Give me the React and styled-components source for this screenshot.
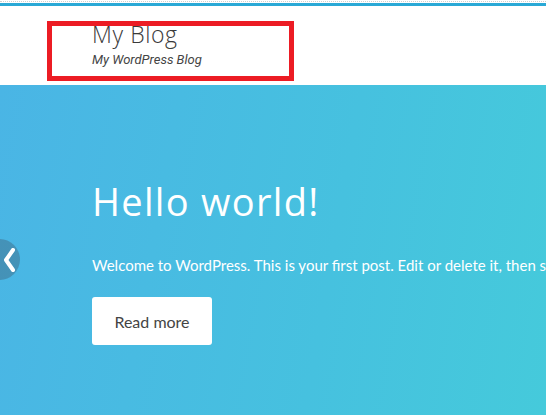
import React from 'react'
import styled, { createGlobalStyle } from 'styled-components'

const GlobalStyle = createGlobalStyle`
  html, body {
    margin: 0;
    padding: 0;
    background: #fff;
    overflow: hidden;
  }
`

const Page = styled.div`
  width: 546px;
  height: 415px;
  overflow: hidden;
  padding-top: 1px;
  box-sizing: border-box;
  display: flex;
  flex-direction: column;
`

const DottedRule = styled.div`
  border-top: 1px dotted #cfcfcf;
  margin-bottom: 1px;
`

const AccentBar = styled.div`
  height: 3px;
  background: #2aa9d6;
`

const Header = styled.header`
  position: relative;
  height: 79px;
  padding: 14px 0 0 92px;
  box-sizing: border-box;
  background: #fff;
`

const SiteTitle = styled.h1`
  margin: 0;
  font-family: 'Open Sans', 'Liberation Sans', sans-serif;
  font-weight: 300;
  font-size: 23px;
  letter-spacing: 0.6px;
  line-height: 28px;
  color: #3a3a3a;
`

const Tagline = styled.p`
  margin: 3px 0 0;
  font-family: 'Roboto', 'Liberation Sans', sans-serif;
  font-style: italic;
  font-size: 13px;
  line-height: 18px;
  color: #444;
`

const Highlight = styled.div`
  position: absolute;
  left: 47px;
  top: 15px;
  width: 247px;
  height: 60px;
  border: 5px solid #ec1c24;
  box-sizing: border-box;
  pointer-events: none;
`

const Hero = styled.section`
  position: relative;
  flex: 1;
  padding: 92px 0 0 92px;
  background: linear-gradient(100deg, #4ab5e5 0%, #46c1df 60%, #45cadb 100%);
  overflow: hidden;
`

const PostTitle = styled.h2`
  margin: 0;
  font-family: 'Open Sans', 'Liberation Sans', sans-serif;
  font-weight: 400;
  font-size: 38px;
  letter-spacing: 1.3px;
  line-height: 48px;
  color: #fff;
`

const Excerpt = styled.p`
  margin: 28px 0 0;
  font-family: 'Lato', 'Liberation Sans', sans-serif;
  font-size: 15px;
  line-height: 24px;
  color: #fff;
  white-space: nowrap;
`

const ReadMore = styled.a`
  display: inline-flex;
  align-items: center;
  justify-content: center;
  margin-top: 20px;
  width: 120px;
  height: 48px;
  border-radius: 3px;
  background: #fff;
  font-family: 'Lato', 'Liberation Sans', sans-serif;
  font-size: 16px;
  color: #444;
  text-decoration: none;
`

const PrevArrow = styled.button`
  position: absolute;
  left: -21px;
  top: 154px;
  width: 41px;
  height: 41px;
  border-radius: 50%;
  border: 0;
  padding: 0 0 0 18px;
  background: rgba(60, 80, 100, 0.35);
  display: flex;
  align-items: center;
  justify-content: center;
  cursor: pointer;
`

export default function App() {
  return (
    <>
      <GlobalStyle />
      <Page>
        <DottedRule />
        <AccentBar />
        <Header>
          <SiteTitle>My Blog</SiteTitle>
          <Tagline>My WordPress Blog</Tagline>
          <Highlight />
        </Header>
        <Hero>
          <PrevArrow aria-label="Previous slide">
            <svg width="12" height="24" viewBox="0 0 12 24">
              <path d="M10 2 L3 12 L10 22" fill="none" stroke="#fff" strokeWidth="4" strokeLinecap="round" strokeLinejoin="round" />
            </svg>
          </PrevArrow>
          <PostTitle>Hello world!</PostTitle>
          <Excerpt>Welcome to WordPress. This is your first post. Edit or delete it, then start writing!</Excerpt>
          <ReadMore href="#">Read more</ReadMore>
        </Hero>
      </Page>
    </>
  )
}
